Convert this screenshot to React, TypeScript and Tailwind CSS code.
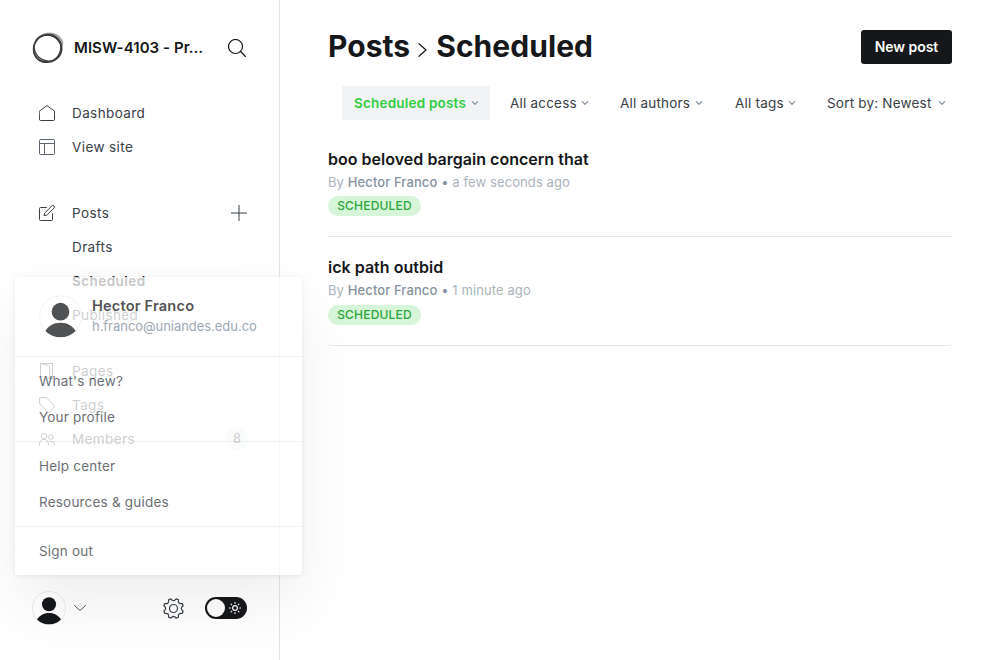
import React from "react";

const gearPath = (() => {
  const pts: string[] = [];
  const at = (r: number, deg: number) => {
    const a = (deg * Math.PI) / 180;
    return `${(10.5 + r * Math.cos(a)).toFixed(2)} ${(10.5 + r * Math.sin(a)).toFixed(2)}`;
  };
  for (let i = 0; i < 8; i++) {
    const c = 22.5 + i * 45;
    pts.push(`${i === 0 ? "M" : "L"}${at(10, c - 7)}`);
    pts.push(`L${at(10, c + 7)}`);
    pts.push(`Q${at(6, c + 22.5)} ${at(10, c + 38)}`);
  }
  return pts.join("") + "Z";
})();

function Line({ className = "", box = "0 0 16 16", w = 1, children }: { className?: string; box?: string; w?: number; children: React.ReactNode }) {
  return (
    <svg viewBox={box} className={className} fill="none" stroke="currentColor" strokeWidth={w} strokeLinecap="round" strokeLinejoin="round">
      {children}
    </svg>
  );
}

function NavItem({ icon, label, strong, trailing }: { icon?: React.ReactNode; label: string; strong?: boolean; trailing?: React.ReactNode }) {
  return (
    <li className="flex h-[34px] items-center pl-[39px] pr-8">
      <span className="w-[33px] shrink-0">{icon}</span>
      <span className={strong ? "flex-1 font-semibold tracking-[0.45px] text-[#15171a]" : "flex-1 tracking-[0.4px]"}>{label}</span>
      {trailing}
    </li>
  );
}

function Avatar({ className, ring }: { className: string; ring: string }) {
  return (
    <svg viewBox="0 0 34 34" className={className}>
      <clipPath id="avatarClip"><circle cx="17" cy="17" r="16.5" /></clipPath>
      <circle cx="17" cy="17" r="16.5" fill="#fff" fillOpacity="0.6" stroke={ring} strokeWidth="0.8" />
      <g fill="#15171a" clipPath="url(#avatarClip)">
        <circle cx="17" cy="13.2" r="7" />
        <path d="M4.5 29.2C7 24.5 11.5 21.9 17 21.9S27 24.5 29.5 29.2C26 32.2 21.5 33.6 17 33.6S8 32.2 4.5 29.2Z" />
      </g>
    </svg>
  );
}

function Filter({ label, active, className }: { label: string; active?: boolean; className: string }) {
  return (
    <div className={`flex h-[34px] items-center justify-between whitespace-nowrap ${className} ${active ? "rounded-[2px] bg-[#f1f3f4] font-semibold text-[#30cf43]" : "text-[#394047]"}`}>
      <span>{label}</span>
      <Line className="h-2 w-2 text-[#7c8b9a]" box="0 0 8 8" w={1.1}><path d="M1.3 2.7 4 5.3 6.7 2.7" /></Line>
    </div>
  );
}

function Post({ title, time, className, badgeClass }: { title: string; time: string; className: string; badgeClass: string }) {
  return (
    <li className={className}>
      <h3 className="text-[16px] leading-5 font-semibold tracking-[0.02px] text-[#15171a]">{title}</h3>
      <p className="mt-[3px] text-[13px] leading-5 tracking-[0.1px] text-[#abb4be]">
        By <span className="font-medium text-[#8693a1]">Hector Franco</span> <span className="text-[#8693a1]">•</span> {time}
      </p>
      <span className={`flex h-5 w-[93px] items-center justify-center rounded-full bg-[#d6f5d9] text-[12px] font-medium tracking-[0.2px] text-[#2ca53b] ${badgeClass}`}>SCHEDULED</span>
    </li>
  );
}

function Sidebar() {
  return (
    <aside className="flex h-[660px] w-[280px] shrink-0 flex-col border-r border-[#e1e3e6] text-[13.5px] text-[#394047]">
      <div className="flex h-16 items-center pt-8 pl-8">
        <Line className="h-8 w-8 shrink-0 text-[#3c3d40]" box="0 0 32 32" w={1}>
          <path d="M4 7.5C8 2.5 14 .6 19.5 1.2c6 .6 10 4.5 11.5 9.3l-1.5 6.5C29 11 26.5 4.5 18 3.2 12 2.3 7 4 4 7.5ZM29.8 15c.8 7-4 13.5-10.5 15.3C25 26 28.6 21 28.8 13Z" fill="#aaa" stroke="#777" strokeWidth="0.6" />
          <ellipse cx="15.4" cy="16.4" rx="14.4" ry="13.4" transform="rotate(-48 15.4 16.4)" strokeWidth="1.5" />
          <ellipse cx="16" cy="16" rx="14" ry="12.8" transform="rotate(25 16 16)" strokeWidth="1.2" />
          <ellipse cx="15.2" cy="16.5" rx="13.7" ry="13.3" strokeWidth="1.1" />
        </Line>
        <span className="ml-[10px] w-[131px] text-[15px] font-semibold tracking-[0.06px] whitespace-nowrap text-[#15171a]">MISW-4103 - Pr…</span>
        <Line className="ml-[23px] h-[18px] w-[18px] shrink-0 text-[#15171a]" box="0 0 18 18" w={1.2}>
          <circle cx="7.5" cy="7.5" r="7" /><path d="m12.5 12.5 5 5" />
        </Line>
      </div>
      <nav className="mt-8 flex-1">
        <ul>
          <NavItem label="Dashboard" icon={<Line className="h-4 w-4"><path d="M.5 6.1 8 .6l7.5 5.5v8.4a1 1 0 0 1-1 1h-13a1 1 0 0 1-1-1Z" /></Line>} />
          <NavItem label="View site" icon={<Line className="h-4 w-4 text-[#5d666f]"><rect x=".5" y=".5" width="15" height="15" rx="1" /><path d="M.5 4.5h15M5.5 4.5v11" /></Line>} />
        </ul>
        <ul className="mt-8">
          <NavItem
            label="Posts"
            icon={<Line className="h-4 w-4"><path d="M7.4 2.5H1.5a1 1 0 0 0-1 1v11a1 1 0 0 0 1 1h11a1 1 0 0 0 1-1V8.8M6 7.7 12.8 1a1.5 1.5 0 0 1 2.2 2.1L8.2 9.9l-2.8.6Z" /></Line>}
            trailing={<Line className="h-4 w-4"><path d="M8 0v16M0 8h16" /></Line>}
          />
          <NavItem label="Drafts" />
          <NavItem label="Scheduled" strong />
          <NavItem label="Published" />
        </ul>
        <ul className="mt-[22px]">
          <NavItem label="Pages" icon={<Line className="h-4 w-4"><path d="M1.5 13.5V.5h12v15h-2.3M1.5.5l8 2q1.2.3 1.2 1.5v11.5l-1-.2M1.5 13.5l1.5.5" /></Line>} />
          <NavItem label="Tags" icon={<Line className="h-4 w-4"><path d="M.6 1.5v5.2l8 8.3a1.2 1.2 0 0 0 1.7 0l4.9-4.9a1.2 1.2 0 0 0 0-1.7L7.3.6H1.5a.9.9 0 0 0-.9.9Z" /></Line>} />
          <NavItem
            label="Members"
            icon={<Line className="h-4 w-4"><circle cx="5" cy="5.2" r="2.8" /><circle cx="11.8" cy="6.1" r="2.2" /><path d="M.5 14v-1.2a4.3 4.3 0 0 1 8.8 0V14M11 10.4c2.5-.5 4.5 1 4.5 3.6" /></Line>}
            trailing={<span className="-mr-[1px] flex h-6 w-[22px] items-center justify-center rounded-full bg-[#edf1f1] text-[13px]">8</span>}
          />
        </ul>
      </nav>
      <footer className="flex h-[69px] items-start pl-8">
        <Avatar className="h-[34px] w-[34px]" ring="#e3e5e8" />
        <Line className="mt-[13px] ml-2 h-2 w-3" box="0 0 12 8" w={0.9}><path d="m.5 1.5 5.5 5 5.5-5" /></Line>
        <Line className="mt-[7px] ml-[77px] h-[21px] w-[21px]" box="0 0 21 21" w={1.2}><path d={gearPath} /><circle cx="10.5" cy="10.5" r="4" /></Line>
        <span className="mt-[6px] ml-[21px] flex h-[22px] w-[42px] items-center rounded-full bg-[#15171a] pl-[2px] text-white">
          <i className="h-[18px] w-[18px] rounded-full bg-white" />
          <Line className="ml-1 h-3 w-3" box="0 0 12 12" w={1.2}><circle cx="6" cy="6" r="2.4" /><path d="M6 .5v.8M6 10.7v.8M.5 6h.8M10.7 6h.8M2.1 2.1l.5.5M9.4 9.4l.5.5M2.1 9.9l.5-.5M9.4 2.6l.5-.5" /></Line>
        </span>
      </footer>
    </aside>
  );
}

function AccountMenu() {
  return (
    <div className="absolute top-[276.5px] left-[15px] h-[298.5px] w-[286.5px] rounded-[3px] bg-white text-[13.5px] tracking-[0.2px] text-[#394047] opacity-75 shadow-[0_0_7px_rgba(0,0,0,0.08),0_2px_3px_rgba(0,0,0,0.03),0_30px_60px_-4px_rgba(0,0,0,0.09)]">
      <div className="flex h-20 items-start border-b border-[#eceef0] pt-[18px] pl-6">
        <Avatar className="h-[43px] w-[43px]" ring="#eff0f2" />
        <div className="ml-[10px]">
          <p className="text-[14.6px] leading-[22px] font-semibold tracking-[0.17px] text-[#15171a]">Hector Franco</p>
          <p className="text-[13px] leading-[19px] tracking-[-0.04px] text-[#7c8b9a]">h.franco@uniandes.edu.co</p>
        </div>
      </div>
      <div className="flex h-[85px] flex-col border-b border-[#eceef0] pt-[6px] pl-6 leading-[36.5px]">
        <span>What's new?</span><span>Your profile</span>
      </div>
      <div className="flex h-[85px] flex-col border-b border-[#eceef0] pt-[6px] pl-6 leading-[36.5px]">
        <span>Help center</span><span>Resources &amp; guides</span>
      </div>
      <div className="flex flex-col pt-[6px] pl-6 leading-[36.5px]"><span>Sign out</span></div>
    </div>
  );
}

export default function App() {
  return (
    <div className="relative flex h-[660px] w-[1000px] overflow-hidden bg-white font-['Inter','Liberation_Sans',sans-serif]">
      <Sidebar />
      <main className="w-[672px] pl-12">
        <header className="flex h-[86px] items-start justify-between pt-[30px]">
          <h1 className="flex items-center text-[30px] leading-8 font-bold tracking-[0.05px] text-[#15171a]">
            Posts
            <Line className="mr-[9px] ml-2 mt-[7px] h-[14px] w-[9px]" box="0 0 9 14" w={1.2}><path d="m1 .7 7 6.3-7 6.3" /></Line>
            Scheduled
          </h1>
          <button className="h-[34px] w-[91px] rounded-[3px] bg-[#15171a] pb-[1px] text-[14px] font-semibold tracking-[-0.05px] text-white">New post</button>
        </header>
        <div className="ml-[14px] flex text-[13.5px] tracking-[0.2px]">
          <Filter label="Scheduled posts" active className="w-[148px] pr-[11px] pl-3" />
          <Filter label="All access" className="ml-5 w-[79px]" />
          <Filter label="All authors" className="ml-[31px] w-[83px]" />
          <Filter label="All tags" className="ml-8 w-[61px]" />
          <Filter label="Sort by: Newest" className="ml-[31px] w-[119px]" />
        </div>
        <ul className="pt-[29px]">
          <Post title="boo beloved bargain concern that" time="a few seconds ago" className="h-[88px] border-b border-[#e6e9eb]" badgeClass="mt-[4px]" />
          <Post title="ick path outbid" time="1 minute ago" className="h-[109px] rounded-b-[4px] border-b border-[#e6e9eb] pt-[20px]" badgeClass="mt-[5px]" />
        </ul>
      </main>
      <AccountMenu />
    </div>
  );
}
